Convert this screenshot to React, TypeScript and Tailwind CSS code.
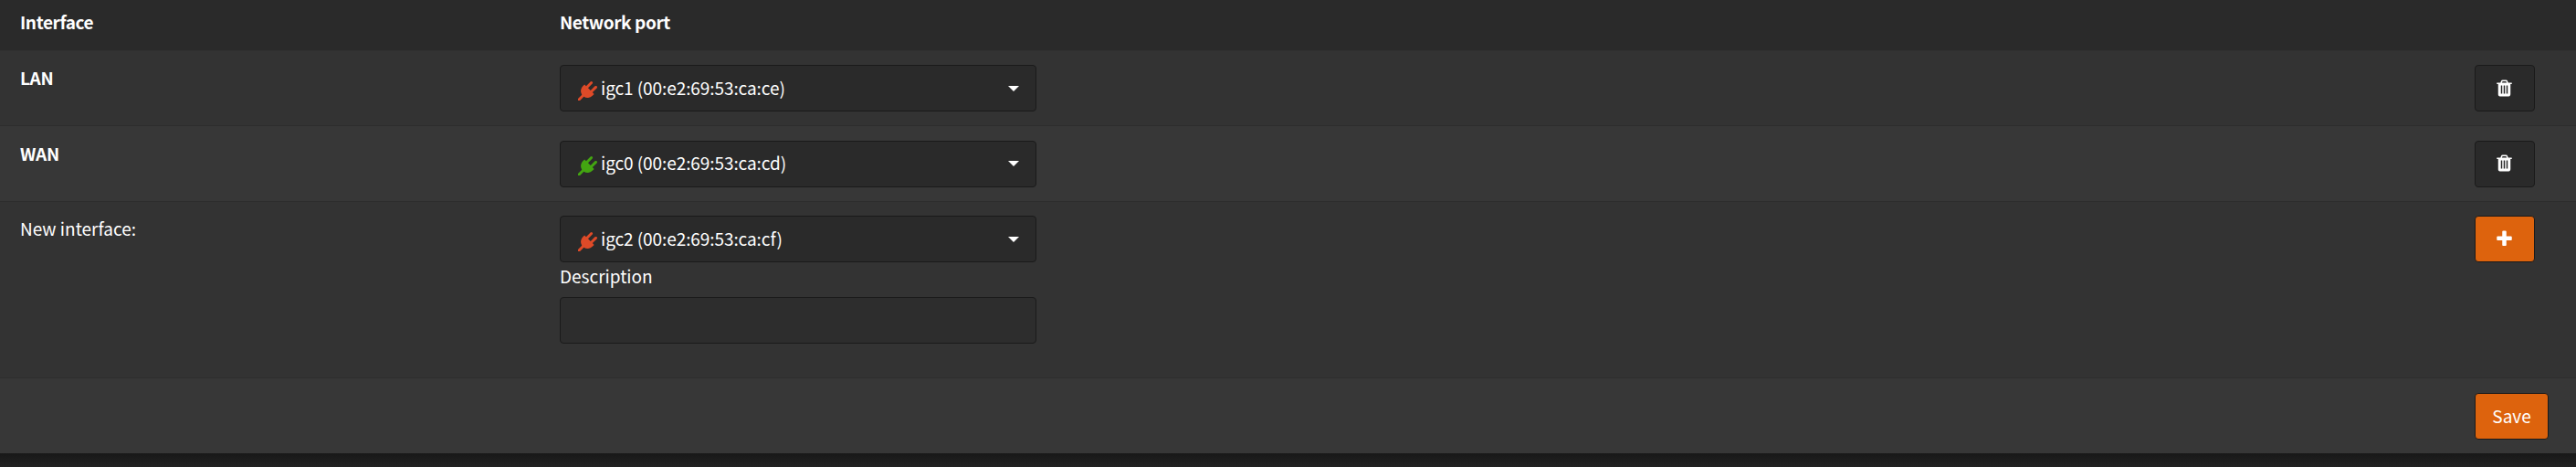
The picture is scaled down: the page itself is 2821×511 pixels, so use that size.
import React from "react";

const PLUG =
  "M1755 453q37 38 37 90.5t-37 90.5l-401 400 150 150-160 160q-163 163-389.5 186.5t-411.5-100.5l-362 362h-181v-181l362-362q-124-185-100.5-411.5t186.5-389.5l160-160 150 150 400-401q38-37 91-37t90 37 37 90.5-37 90.5l-400 401 234 234 401-400q38-37 91-37t90 37z";
const TRASH =
  "M704 1376v-704q0-14-9-23t-23-9h-64q-14 0-23 9t-9 23v704q0 14 9 23t23 9h64q14 0 23-9t9-23zm256 0v-704q0-14-9-23t-23-9h-64q-14 0-23 9t-9 23v704q0 14 9 23t23 9h64q14 0 23-9t9-23zm256 0v-704q0-14-9-23t-23-9h-64q-14 0-23 9t-9 23v704q0 14 9 23t23 9h64q14 0 23-9t9-23zm-544-992h448l-48-117q-7-9-17-11h-317q-10 2-17 11zm928 32v64q0 14-9 23t-23 9h-96v948q0 83-47 143.5t-113 60.5h-832q-66 0-113-58.5t-47-141.5v-952h-96q-14 0-23-9t-9-23v-64q0-14 9-23t23-9h309l70-167q15-37 54-63t79-26h320q40 0 79 26t54 63l70 167h309q14 0 23 9t9 23z";
const PLUS =
  "M1600 736v192q0 40-28 68t-68 28h-416v416q0 40-28 68t-68 28h-192q-40 0-68-28t-28-68v-416h-416q-40 0-68-28t-28-68v-192q0-40 28-68t68-28h416v-416q0-40 28-68t68-28h192q40 0 68 28t28 68v416h416q40 0 68 28t28 68z";

function Icon({ path, className }: { path: string; className?: string }) {
  return (
    <svg viewBox="0 0 1792 1792" className={`size-[21px] shrink-0 fill-current ${className ?? ""}`}>
      <path d={path} />
    </svg>
  );
}

function PortSelect({ label, up }: { label: string; up?: boolean }) {
  return (
    <button className="flex h-[51px] w-[522px] items-center rounded-[4px] border border-[#1a1a1a] bg-[#2a2a2a] pl-[19px] pr-[18px] text-left">
      <Icon path={PLUG} className={up ? "mt-[4px] text-[#43a511]" : "mt-[5px] text-[#de4a28]"} />
      <span className={`ml-[4px] grow tracking-[-0.08px] ${up ? "pb-[3px]" : "pb-[1px]"}`}>{label}</span>
      <svg viewBox="0 0 12 6" className={`h-[6px] w-[12px] fill-white ${up ? "mb-[2px]" : ""}`}>
        <path d="M0 0h12L6 6z" />
      </svg>
    </button>
  );
}

const actionButton =
  "flex h-[51px] w-[66px] items-center justify-center rounded-[4px] border border-[#1a1a1a] pr-[1px] text-white";

export default function App() {
  return (
    <div className="h-[511px] w-[2821px] overflow-hidden bg-[#222222] font-['Noto_Sans_CJK_JP','Noto_Sans_CJK_SC',sans-serif] text-[19px] leading-[30px] text-white">
      <div className="h-[496px]">
        <div className="flex h-[55px] bg-[#2a2a2a] pt-[9px] font-bold tracking-[-0.4px]">
          <div className="w-[613px] pl-[22px]">Interface</div>
          <div>Network port</div>
        </div>
        <div className="flex h-[82px] border-t border-[#303030] bg-[#333333] pt-[15px]">
          <div className="-mt-px w-[613px] pl-[22px] font-bold tracking-[-0.3px]">LAN</div>
          <PortSelect label="igc1 (00:e2:69:53:ca:ce)" />
          <div className="ml-auto mr-[45px]">
            <button className={`${actionButton} bg-[#2a2a2a]`}><Icon path={TRASH} /></button>
          </div>
        </div>
        <div className="flex h-[83px] border-t border-[#2d2d2d] bg-[#373737] pt-[16px]">
          <div className="-mt-px w-[613px] pl-[22px] font-bold tracking-[-0.3px]">WAN</div>
          <PortSelect label="igc0 (00:e2:69:53:ca:cd)" up />
          <div className="ml-auto mr-[45px]">
            <button className={`${actionButton} bg-[#2a2a2a] pb-[2px]`}><Icon path={TRASH} /></button>
          </div>
        </div>
        <div className="flex h-[193px] border-t border-[#2d2d2d] bg-[#333333] pt-[15px]">
          <div className="-mt-px w-[613px] pl-[22px]">New interface:</div>
          <div>
            <PortSelect label="igc2 (00:e2:69:53:ca:cf)" />
            <div className="h-[38px]">Description</div>
            <input className="block h-[51px] w-[522px] rounded-[4px] border border-[#1a1a1a] bg-[#2d2d2d] px-[18px] outline-none" />
          </div>
          <div className="ml-auto mr-[45px]">
            <button className={`${actionButton} bg-[#dd630d]`}><Icon path={PLUS} /></button>
          </div>
        </div>
        <div className="flex h-[83px] justify-end border-t border-[#2d2d2d] bg-[#373737] pr-[30px] pt-[16px]">
          <button className="h-[51px] w-[81px] rounded-[4px] border border-[#1a1a1a] bg-[#dd630d] pb-[2px]">Save</button>
        </div>
      </div>
      <div className="h-[15px] bg-linear-to-b from-[#181818] to-[#222222]" />
    </div>
  );
}
